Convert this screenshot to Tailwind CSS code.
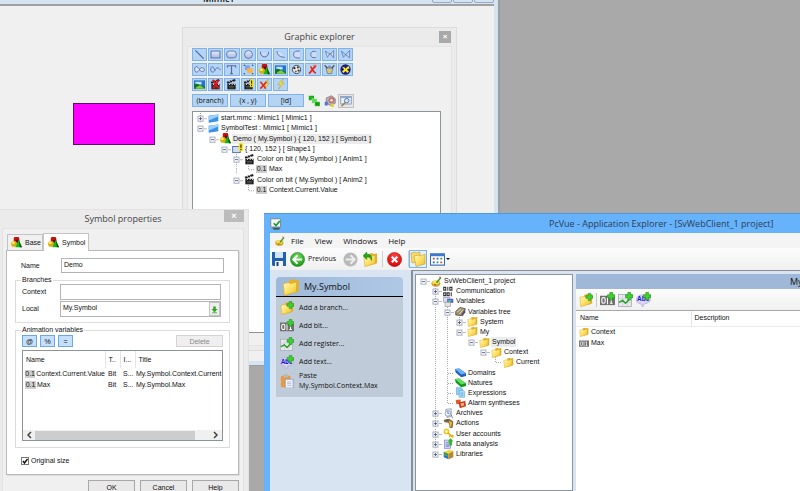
<!DOCTYPE html>
<html lang="en">

<head>
  <meta charset="UTF-8">
  <meta name="viewport" content="width=device-width, initial-scale=1.0">
  <title>PcVue - Application Explorer</title>
  <script src="https://cdn.jsdelivr.net/npm/@tailwindcss/browser@4"></script>
</head>

<body class="relative h-screen overflow-hidden bg-[#a9a9a9] font-['Liberation_Sans',sans-serif] text-[7px] leading-[10px] text-[#111]">

  <!-- icon sprite -->
  <svg class="absolute size-0" aria-hidden="true">
    <defs>
      <linearGradient id="gFolder" x1="0" y1="0" x2="1" y2="1"><stop offset="0" stop-color="#fff9c0"/><stop offset=".5" stop-color="#fde268"/><stop offset="1" stop-color="#eaba2c"/></linearGradient>
      <linearGradient id="gShape" x1="0" y1="0" x2="0" y2="1"><stop offset="0" stop-color="#e4ecfa"/><stop offset="1" stop-color="#a9b9de"/></linearGradient>
      <radialGradient id="gGreen" cx=".5" cy=".3" r=".7"><stop offset="0" stop-color="#6fe05a"/><stop offset="1" stop-color="#129312"/></radialGradient>
      <radialGradient id="gRed" cx=".5" cy=".3" r=".7"><stop offset="0" stop-color="#ff4a40"/><stop offset="1" stop-color="#d80008"/></radialGradient>
    </defs>
    <symbol id="line" viewBox="0 0 16 16"><path d="M2 2L14 14" stroke="#4c608f" stroke-width="1.5"/></symbol>
    <symbol id="rect" viewBox="0 0 16 16"><rect x="1.500" y="3" width="13" height="10" fill="url(#gShape)" stroke="#566aa0" stroke-width="1.3"/></symbol>
    <symbol id="round" viewBox="0 0 16 16"><rect x="1" y="3" width="14" height="10" rx="4" fill="url(#gShape)" stroke="#566aa0" stroke-width="1.2"/></symbol>
    <symbol id="circle" viewBox="0 0 16 16"><circle cx="8" cy="8" r="5.800" fill="url(#gShape)" stroke="#566aa0" stroke-width="1.2"/></symbol>
    <symbol id="arc" viewBox="0 0 16 16"><path d="M2 5C2 14 14 14 14 5Z" fill="#c9d8f2"/><path d="M2 4C2 14 14 14 14 4" fill="none" stroke="#566aa0" stroke-width="1.4"/></symbol>
    <symbol id="arc2" viewBox="0 0 16 16"><path d="M3 3C3 9 8 12 14 12L9 6Z" fill="#d5e0f4"/><path d="M3 3C3 9 8 12 14 12" fill="none" stroke="#566aa0" stroke-width="1.4"/></symbol>
    <symbol id="chord" viewBox="0 0 16 16"><path d="M13 3H9C2 3 2 13 9 13H13" fill="#cfdcf3" stroke="#566aa0" stroke-width="1.3"/></symbol>
    <symbol id="chord2" viewBox="0 0 16 16"><path d="M13 4C3 0 3 16 13 12" fill="#cfdcf3" stroke="#566aa0" stroke-width="1.3"/></symbol>
    <symbol id="poly" viewBox="0 0 16 16"><path d="M2 3L5 12L9 6L14 13V2L9 8L2 3" fill="#d8e3f6" stroke="#566aa0" stroke-width="1"/></symbol>
    <symbol id="poly2" viewBox="0 0 16 16"><path d="M14 13V2L5 12L2 3L14 13" fill="none" stroke="#566aa0" stroke-width="1"/></symbol>
    <symbol id="inf" viewBox="0 0 16 16"><path d="M8 8C5 2 1 3 1 8S6 13 8 8C10 4 15 5 15 8.500S10 12 8 8Z" fill="#d8e3f6" stroke="#566aa0" stroke-width="1.3"/></symbol>
    <symbol id="inf2" viewBox="0 0 16 16"><path d="M7 9C5 2 1 3 1 8S6 13 8 8C10 4 13 5 15 9" fill="none" stroke="#566aa0" stroke-width="1.3"/></symbol>
    <symbol id="text" viewBox="0 0 16 16"><path d="M2 5V2.500H14V5M8 3V14M6 14H10" fill="none" stroke="#566aa0" stroke-width="1.7"/></symbol>
    <symbol id="group" viewBox="0 0 16 16"><rect x="3" y="2" width="7" height="7" fill="#7fa3e8"/><rect x="6" y="6" width="8" height="7" rx="1" fill="#ffb23c"/><path d="M1 1h2v2H1zM13 1h2v2h-2zM1 13h2v2H1zM13 13h2v2h-2z" fill="#39507f"/></symbol>
    <symbol id="shapes" viewBox="0 0 16 16"><rect x="4" y="0" width="8" height="8" rx="2" fill="#c81010"/><path d="M7 4h5v5H7z" fill="#5a0808"/><circle cx="4.500" cy="10" r="4.300" fill="#d8ae08"/><circle cx="3.500" cy="8.500" r="2" fill="#fff06a"/><path d="M11 4L16 15H6.500Z" fill="#18b418"/><path d="M11 4L13 15H16Z" fill="#0a4d0a"/></symbol>
    <symbol id="image" viewBox="0 0 16 16"><path d="M0 2H16V14H0Z" fill="#2374cc"/><path d="M2 4h9v4H2z" fill="#bfe6ff"/><path d="M0 8C5 5 7 10 16 11V14H0Z" fill="#14722c"/><path d="M3 12L9 9L16 14H3Z" fill="#7fcf3a"/></symbol>
    <symbol id="palette" viewBox="0 0 16 16"><circle cx="8" cy="8" r="6" fill="#eee" stroke="#333" stroke-width="1.200"/><circle cx="5" cy="6" r="1.600" fill="#222"/><circle cx="10" cy="5" r="1.600" fill="#444"/><circle cx="11" cy="9.500" r="1.600" fill="#333"/><circle cx="7" cy="11" r="1.500" fill="#666"/></symbol>
    <symbol id="cross" viewBox="0 0 16 16"><path d="M5 4C7 4 9 13 13 13M13 3C10 4 7 10 3 14" fill="none" stroke="#ee2211" stroke-width="2.600"/><path d="M9 2h5" stroke="#f07030" stroke-width="1.500"/></symbol>
    <symbol id="bucket" viewBox="0 0 16 16"><path d="M3 6H13L11 14H5Z" fill="#c8c8ac" stroke="#666"/><path d="M1 2L5 6M15 2L11 6" stroke="#444" stroke-width="2"/><circle cx="8" cy="4" r="2" fill="#7c80d0"/><path d="M6 8h4v4H6z" fill="#e0cc40"/></symbol>
    <symbol id="noevent" viewBox="0 0 16 16"><circle cx="8" cy="8" r="7.500" fill="#20207a"/><path d="M3 4L7 5L8 7L12 3L14 6L10 8L13 11L11 13L8 10L5 13L3 11L6 8Z" fill="#fff01a"/></symbol>
    <symbol id="clap" viewBox="0 0 16 16"><path d="M2 7H14V15H2Z" fill="#151515"/><path d="M1 4L13 0L14 3L2 7Z" fill="#222"/><path d="M4 3l2 2M8 2l2 2M4 9l2-2M8 9l2-2M12 9l1-2" stroke="#fff" stroke-width="1.300"/><path d="M4 11h8M4 13h8" stroke="#999" stroke-width=".7"/></symbol>
    <symbol id="clapx" viewBox="0 0 16 16"><use href="#clap"/><path d="M4 1L13 14M13 1L4 14" stroke="#e01414" stroke-width="2.600"/></symbol>
    <symbol id="clapw" viewBox="0 0 16 16"><use href="#clap"/><rect x="10" y="0" width="5" height="12" rx="2" fill="#ffe600"/><path d="M12.500 2V7M12.500 8.500V10.500" stroke="#222" stroke-width="1.500"/></symbol>
    <symbol id="bolt" viewBox="0 0 16 16"><path d="M10 1L4 8H8L5 15L13 6H9L12 1Z" fill="#ffe629" stroke="#a89a58" stroke-width=".8"/></symbol>
    <symbol id="boltx" viewBox="0 0 16 16"><use href="#bolt" x="2"/><path d="M2 4L10 14M11 4L2 14" stroke="#ee2211" stroke-width="2.200"/></symbol>
    <symbol id="squares" viewBox="0 0 16 16"><path d="M1 1H8V7H1Z" fill="#1cae1c"/><path d="M5 5H12V11H5Z" fill="#55d845" stroke="#fff" stroke-width=".5"/><path d="M9 9H16V15H9Z" fill="#0d9d0d" stroke="#fff" stroke-width=".5"/></symbol>
    <symbol id="gear" viewBox="0 0 16 16"><path d="M3 4L10 1L15 5V11L9 14L3 11Z" fill="#b8b0b4" stroke="#777"/><circle cx="10" cy="7" r="4" fill="#c97070"/><circle cx="10" cy="7" r="1.700" fill="#eee"/><path d="M1 9h4v5H1z" fill="#4b76d8"/><path d="M9 12h4v4H9z" fill="#e9cf30"/></symbol>
    <symbol id="find" viewBox="0 0 16 16"><rect x="1" y="2" width="14" height="10" fill="#e6eef8" stroke="#7c8aa5"/><path d="M1 2h14v2H1z" fill="#8fa9cf"/><circle cx="9" cy="7.500" r="3" fill="#cfe6ff" stroke="#57719c" stroke-width="1.200"/><path d="M7 10L2 15" stroke="#9a7b50" stroke-width="2"/></symbol>
    <symbol id="screen" viewBox="0 0 16 16"><path d="M1 4L15 2V12L1 14Z" fill="#3a90e8"/><path d="M1 4L15 2V5L1 11Z" fill="#9ad0fa"/></symbol>
    <symbol id="shapew" viewBox="0 0 16 16"><rect x="1" y="5" width="11" height="9" fill="#d0def5" stroke="#4864a8" stroke-width="1.300"/><rect x="10" y="0" width="6" height="12" rx="2" fill="#ffe600"/><path d="M13 2V7M13 8.500V10.500" stroke="#222" stroke-width="1.600"/></symbol>
    <symbol id="folder" viewBox="0 0 16 16"><path d="M6 2L10 1L11 2L15 1.500V12L6 14Z" fill="#e3b02a"/><path d="M1 5L6 4L7 5L13 3.500V12.500L2 15.500Z" fill="url(#gFolder)" stroke="#d6a526" stroke-width=".6"/></symbol>
    <symbol id="plus" viewBox="0 0 16 16"><path d="M10.500 .5H13.500V3H16V6H13.500V8.500H10.500V6H8V3H10.500Z" fill="#3fd02c" stroke="#158a18" stroke-width=".6"/></symbol>
    <symbol id="folderadd" viewBox="0 0 16 16"><use href="#folder"/><use href="#plus"/></symbol>
    <symbol id="bit" viewBox="0 0 16 16"><rect y="4" width="16" height="10" fill="#707070"/><rect x="2" y="6" width="3.500" height="6" rx="1.500" fill="none" stroke="#fff" stroke-width="1.200"/><path d="M8 5V13M10.500 7L12 6V12M10.500 12H13.500" fill="none" stroke="#fff" stroke-width="1.100"/></symbol>
    <symbol id="bitadd" viewBox="0 0 16 16"><use href="#bit"/><use href="#plus"/></symbol>
    <symbol id="regadd" viewBox="0 0 16 16"><rect x=".5" y="2.500" width="14" height="13" fill="#e8e8ee" stroke="#a5a5b2" stroke-width=".8"/><path d="M5 3v12M10 3v12M1 7h13M1 11h13" stroke="#c6c6d0" stroke-width=".6"/><path d="M1 11L5 9L8 12L12 8" fill="none" stroke="#20a020" stroke-width="1.500"/><use href="#plus"/></symbol>
    <symbol id="txtadd" viewBox="0 0 16 16"><path d="M8 3C-2 3 -2 12 5 12.500L7 16L9 12.500C18 12 17 3 8 3Z" fill="#d9d4fa" stroke="#a39fd0" stroke-width=".6"/><text x="1" y="10" font-size="7" font-weight="bold" fill="#1d16d4">Abc</text><use href="#plus"/></symbol>
    <symbol id="paste" viewBox="0 0 16 16"><rect x="1" y="2" width="11" height="13" rx="1" fill="#e99a3c"/><rect x="4" y="0" width="5" height="4" rx="1" fill="#b9b9b9"/><path d="M6 6H15V16H6Z" fill="#f4f6fd" stroke="#7f8fb8" stroke-width=".8"/><path d="M8 9h5M8 11h5M8 13h5" stroke="#98a6cc" stroke-width=".8"/></symbol>
    <symbol id="save" viewBox="0 0 16 16"><path d="M1 1H15V15H2L1 14Z" fill="#2260b4"/><rect x="4" y="1" width="8" height="6" fill="#cfe5fa"/><rect x="4" y="10" width="8" height="5" fill="#f2f2f2"/><path d="M5.500 11h2v4h-2z" fill="#1b3f78"/></symbol>
    <symbol id="back" viewBox="0 0 16 16"><circle cx="8" cy="8" r="7.500" fill="url(#gGreen)" stroke="#1b7d1b" stroke-width=".6"/><path d="M8 3.500L3.500 8L8 12.500M4 8H13" fill="none" stroke="#fff" stroke-width="2.200"/></symbol>
    <symbol id="next" viewBox="0 0 16 16"><circle cx="8" cy="8" r="7.500" fill="#b9b9b9"/><path d="M8 3.500L12.500 8L8 12.500M12 8H3" fill="none" stroke="#ededed" stroke-width="2"/></symbol>
    <symbol id="stop" viewBox="0 0 16 16"><circle cx="8" cy="8" r="7.600" fill="url(#gRed)" stroke="#a00" stroke-width=".5"/><path d="M5 5L11 11M11 5L5 11" stroke="#fff" stroke-width="2.200"/></symbol>
    <symbol id="up" viewBox="0 0 16 16"><use href="#folder"/><path d="M9 9C8 6 6 5 4 5.500V8L0 4L4 0V2.500C8 2 10 5 9 9Z" fill="#24a81c" stroke="#0b6d10" stroke-width=".5"/></symbol>
    <symbol id="folders" viewBox="0 0 16 16"><path d="M1 2L5 1L6 2L10 1V10L2 12Z" fill="#f7da6a" stroke="#c89a28" stroke-width=".6"/><path d="M4 5L9 4L10 5L15 3V13L6 15.500Z" fill="url(#gFolder)" stroke="#c89a28" stroke-width=".6"/></symbol>
    <symbol id="grid" viewBox="0 0 16 16"><rect x=".5" y="2" width="15" height="12" fill="#fff" stroke="#2e6ab8" stroke-width="1.200"/><path d="M0 2H16V4.500H0Z" fill="#3d7acb"/><path d="M3 6h2v2H3zM11 10h2v2h-2z" fill="#d34a4a"/><path d="M7 6h2v2H7zM3 10h2v2H3z" fill="#3563c4"/><path d="M11 6h2v2h-2zM7 10h2v2H7z" fill="#3b9a4b"/></symbol>
    <symbol id="app" viewBox="0 0 16 16"><rect x="1" y="1" width="13" height="11" rx="1" fill="#f2f4f2" stroke="#6a7b70"/><path d="M3 13H14L12 15.500H5Z" fill="#4a5a58"/><path d="M5 7L8 10L13 4" fill="none" stroke="#1e9438" stroke-width="2.200"/></symbol>
    <symbol id="project" viewBox="0 0 16 16"><ellipse cx="7" cy="11" rx="6.500" ry="4.500" fill="#c9a51f"/><ellipse cx="7" cy="9.500" rx="5" ry="3" fill="#ffe254"/><path d="M7 9L14 1L15 3L9 11Z" fill="#3f9e3a"/><path d="M4 11l4 1-2 2z" fill="#e04b22"/><path d="M11 1h3v3z" fill="#e04b22"/></symbol>
    <symbol id="comm" viewBox="0 0 16 16"><path d="M1 2h3v4H1zM7 1v6M10 2h3v4h-3zM1 10h3v4H1zM6 10h3v4H6zM12 9v6" fill="none" stroke="#333" stroke-width="1.500"/></symbol>
    <symbol id="vars" viewBox="0 0 16 16"><rect x="1" y="2" width="9" height="7" fill="#dcdff6" stroke="#8d92c8"/><rect x="6" y="4" width="9" height="6" fill="#5361d8"/><rect x="3" y="9" width="8" height="6" fill="#e6e6e6" stroke="#999"/><path d="M7 6h5v2H7z" fill="#4ad07a"/></symbol>
    <symbol id="tree" viewBox="0 0 16 16"><path d="M1 8L7 2L15 4L9 14L1 13Z" fill="#9f8b68" stroke="#45403a"/><path d="M3 9L9 4M6 12L12 5" stroke="#f2ead8" stroke-width="1.300"/><path d="M9 14L15 4V9L11 15Z" fill="#4c4f7c"/></symbol>
    <symbol id="domain" viewBox="0 0 16 16"><path d="M0 3L6 2L16 9V13L9 15L1 8Z" fill="#1e60c4"/><path d="M0 3L6 2L16 9L9 11Z" fill="#69b4f6"/></symbol>
    <symbol id="nature" viewBox="0 0 16 16"><path d="M0 3L6 2L16 9V13L9 15L1 8Z" fill="#0f9a1c"/><path d="M0 3L6 2L16 9L9 11Z" fill="#61e05c"/></symbol>
    <symbol id="expr" viewBox="0 0 16 16"><path d="M2 1H9L11 3V11H2Z" fill="#8ccdf3" stroke="#6aabdc"/><path d="M6 5H12L14 7V15H6Z" fill="#a9dcfa" stroke="#6aabdc"/><path d="M8 9h4M8 12h4" stroke="#4a90c8"/></symbol>
    <symbol id="alarm" viewBox="0 0 16 16"><path d="M1 3L8 2L9 8L2 9Z" fill="#e05a28"/><path d="M5 7L15 4L16 12L7 15Z" fill="#c8401a"/><path d="M8 8l5-1v4l-4 1z" fill="#f5b08c"/></symbol>
    <symbol id="archive" viewBox="0 0 16 16"><path d="M4 2L12 1V12L6 14Z" fill="#dfe8f2" stroke="#8193ac"/><circle cx="7" cy="8" r="4" fill="#eef4fb" stroke="#6f86a6"/><path d="M7 5V8H9M12 10L14 15" stroke="#44618a" fill="none"/></symbol>
    <symbol id="action" viewBox="0 0 16 16"><path d="M1 3L9 1L15 5L14 14L10 15L8 7L2 6Z" fill="#8b6a3d"/><path d="M9 4l4 2-1 6-2 1z" fill="#e8c040"/><path d="M1 3l6-1 1 3z" fill="#555"/></symbol>
    <symbol id="key" viewBox="0 0 16 16"><circle cx="5" cy="5" r="3" fill="none" stroke="#f2c928" stroke-width="2.500"/><path d="M7 7L14 13M11 11L9 13M14 10v4" stroke="#e2b014" stroke-width="2.400"/></symbol>
    <symbol id="analysis" viewBox="0 0 16 16"><rect x="2" y="3" width="9" height="12" fill="#cfd6f2" stroke="#7a86c4"/><path d="M4 7h5M4 10h5M4 12h5" stroke="#5964b0"/><path d="M9 11V5H7L11 0L15 5H13V11Z" fill="#35b52d"/></symbol>
    <symbol id="lib" viewBox="0 0 16 16"><path d="M1 4L9 1L15 3L8 7Z" fill="#f7d247"/><path d="M1 4L8 7V11L1 8Z" fill="#3d9a3c"/><path d="M1 8L8 11V15L1 12Z" fill="#2a76c8"/><path d="M8 7L15 3V12L8 15Z" fill="#b98a22"/></symbol>
    <!-- tree connectors -->
    <symbol id="tv" viewBox="0 0 12 10" preserveAspectRatio="none"><path d="M5.500 0V10" stroke="#aaa" stroke-dasharray="1 1"/></symbol>
    <symbol id="te" viewBox="0 0 12 10" preserveAspectRatio="none"><path d="M5.500 0V5M6 5.500H12" fill="none" stroke="#aaa" stroke-dasharray="1 1"/></symbol>
    <symbol id="tt" viewBox="0 0 12 10" preserveAspectRatio="none"><path d="M5.500 0V10M6 5.500H12" fill="none" stroke="#aaa" stroke-dasharray="1 1"/></symbol>
    <symbol id="tm" viewBox="0 0 12 10" preserveAspectRatio="none"><path d="M9 5.500H12" stroke="#bbb"/><rect x="3" y="3" width="5" height="5" fill="#fff" stroke="#9ea6b6" stroke-width=".9"/><path d="M4 5.500H7" stroke="#334a7c" stroke-width=".8"/></symbol>
    <symbol id="tp" viewBox="0 0 12 10" preserveAspectRatio="none"><use href="#tm"/><path d="M5.500 4V7" stroke="#334a7c" stroke-width=".8"/></symbol>
    <symbol id="tmv" viewBox="0 0 12 10" preserveAspectRatio="none"><use href="#tv"/><use href="#tm"/></symbol>
    <symbol id="tpv" viewBox="0 0 12 10" preserveAspectRatio="none"><use href="#tv"/><use href="#tp"/></symbol>
  </svg>

  <!-- Mimic1 window -->
  <section class="absolute -top-3.5 left-0 flex h-[380px] w-[500px] flex-col border-r-2 border-b border-[#9b9ea3] bg-[#d6e4f2] pr-1 pb-1">
    <header class="relative flex h-5 items-end border-b-2 border-[#a0a0a0] pl-[203px]">
      <h1 class="font-['Open_Sans',sans-serif] text-[9px] font-semibold">Mimic1</h1>
      <div class="absolute top-0 right-0 flex gap-px">
        <button aria-label="Minimize" class="h-[17px] w-5 rounded-b-xs border border-[#9aa9bd]"></button>
        <button aria-label="Maximize" class="h-[17px] w-5 rounded-b-xs border border-[#9aa9bd]"></button>
        <button aria-label="Close" class="h-[17px] w-5 rounded-b-xs border border-[#9aa9bd]"></button>
      </div>
    </header>

    <div class="relative flex-1 bg-[#f0f0f0]">
      <div class="absolute top-[97px] left-[73px] h-[42px] w-[82px] border border-[#5a1070] bg-[#ff00ff]"></div>

      <!-- Graphic explorer -->
      <section class="absolute top-[21px] left-[182px] flex h-[324px] w-[275px] flex-col border border-[#dcdcdc] bg-[#ebebeb] px-1 pb-1">
        <header class="relative flex h-[18px] items-center justify-center">
          <h2 class="font-['Open_Sans',sans-serif] text-[9px] text-[#444]">Graphic explorer</h2>
          <button aria-label="Close" class="absolute top-[3px] right-px flex h-3 w-3 items-center justify-center bg-[#a9a9a9] text-[8px] leading-none font-bold text-white">×</button>
        </header>
        <div class="flex min-h-0 flex-1 flex-col border border-[#e4e4e4] bg-[#f0f0f0] pt-px pr-2.5 pl-1 pb-3">
          <div id="shapeTools" class="grid w-[161px] grid-cols-10 gap-x-px gap-y-0.5"></div>
          <div class="mt-[3px] flex h-[13px] items-center gap-0.5">
            <button class="h-full w-9 border border-[#7fb2e8] bg-[#b3d4f4] font-['Open_Sans',sans-serif] leading-none">(branch)</button>
            <button class="h-full w-9 border border-[#7fb2e8] bg-[#b3d4f4] font-['Open_Sans',sans-serif] leading-none">{x , y}</button>
            <button class="h-full w-9 border border-[#7fb2e8] bg-[#b3d4f4] font-['Open_Sans',sans-serif] leading-none">[id]</button>
            <button aria-label="Links" class="ml-0.5"><svg class="size-3"><use href="#squares"/></svg></button>
            <button aria-label="Options" class="ml-0.5"><svg class="size-3"><use href="#gear"/></svg></button>
            <button aria-label="Search" class="border border-[#c2c2c2] bg-[#e6e6e6] px-px"><svg class="size-3"><use href="#find"/></svg></button>
          </div>
          <div class="mt-1 min-h-0 flex-1 border border-[#8f949c] bg-white py-px pl-0.5">
            <ul id="mimicTree" class="flex h-[82px] flex-col"></ul>
          </div>
        </div>
      </section>
    </div>
  </section>

  <!-- Symbol properties dialog -->
  <section class="absolute top-[209px] bottom-0 left-0 flex w-[249px] flex-col overflow-hidden border-t border-r border-[#e2e2e2] bg-[#ebebeb] pr-1 pl-0.5">
    <header class="relative flex h-[18px] shrink-0 items-center justify-center">
      <h2 class="font-['Open_Sans',sans-serif] text-[9px] text-[#444]">Symbol properties</h2>
      <button aria-label="Close" class="absolute top-0 right-0 flex h-3 w-5 items-center justify-center bg-[#bcbcbc] text-[9px] leading-none font-bold text-white">×</button>
    </header>

    <form class="flex-1 border border-[#e2e2e2] bg-[#f0f0f0] pt-1 pr-1 pl-[3px]" onsubmit="return false">
      <div class="flex items-end pl-px">
        <button type="button" class="flex h-4 w-9 items-center gap-[3px] border border-b-0 border-[#c4c4c4] px-[3px]"><svg class="size-[11px] shrink-0"><use href="#shapes"/></svg>Base</button>
        <button type="button" class="relative -mb-px flex h-[18px] w-[46px] items-center gap-[3px] border border-b-0 border-[#c4c4c4] bg-white px-1"><svg class="size-[11px] shrink-0"><use href="#shapes"/></svg>Symbol</button>
      </div>

      <div class="flex h-[225px] flex-col border border-[#b9b9bd] bg-white px-2 pt-[7px] shadow-[1px_1px_0_#ddd]">
        <div class="flex items-center px-1.5">
          <label for="name" class="w-10">Name</label>
          <input id="name" value="Demo" class="h-[15px] min-w-0 flex-1 border border-[#b4b4b8] px-0.5 pb-0.5">
        </div>

        <fieldset class="mt-0.5 h-12 border border-[#dcdcdc] px-1.5">
          <legend class="-ml-px px-px">Branches</legend>
          <div class="-mt-px flex items-center pr-0.5">
            <label for="context" class="w-[38px]">Context</label>
            <input id="context" class="h-4 min-w-0 flex-1 border border-[#b4b4b8] px-0.5">
          </div>
          <div class="mt-px flex items-center pr-0.5">
            <label for="local" class="w-[38px]">Local</label>
            <div class="flex h-4 flex-1 border border-[#b4b4b8]">
              <input id="local" value="My.Symbol" class="min-w-0 flex-1 px-0.5 pb-0.5">
              <button type="button" aria-label="Pick branch" class="w-[11px] border border-[#c4c4c4] bg-[#eee]"><svg viewBox="0 0 10 14" class="h-full w-full"><path d="M3.500 4H6.500V7H8.500L5 11L1.500 7H3.500ZM2 11h6v1H2z" fill="#35a51d"/></svg></button>
            </div>
          </div>
        </fieldset>

        <fieldset class="mt-0.5 h-[123px] border border-[#dcdcdc] px-1.5">
          <legend class="-ml-px px-px">Animation variables</legend>
          <div class="flex h-3 items-stretch gap-[3px]">
            <button type="button" class="w-[15px] border border-[#6ea8e0] bg-[#c4e0fc] leading-none">@</button>
            <button type="button" class="w-[15px] border border-[#6ea8e0] bg-[#c4e0fc] leading-none">%</button>
            <button type="button" class="w-[15px] border border-[#6ea8e0] bg-[#c4e0fc] leading-none">=</button>
            <button type="button" disabled class="ml-auto w-[47px] border border-[#d4d4d4] bg-[#efefef] leading-none text-[#888]">Delete</button>
          </div>
          <div class="mt-[3px] flex h-[91px] flex-col overflow-hidden border border-[#8c919a]">
            <table class="w-full table-fixed text-left whitespace-nowrap">
              <thead>
                <tr class="h-[17px]">
                  <th class="w-[82px] border-r border-[#dfe6f0] pl-[3px] font-normal">Name</th>
                  <th class="w-[15px] border-r border-[#dfe6f0] pl-[3px] font-normal">T..</th>
                  <th class="w-[15px] border-r border-[#dfe6f0] pl-[3px] font-normal">I...</th>
                  <th class="pl-[3px] font-normal">Title</th>
                </tr>
              </thead>
              <tbody>
                <tr class="h-[11px]">
                  <td class="pl-0.5"><span class="flex items-center gap-px"><span class="w-[11px] bg-[#cfcfcf] text-center leading-[8px]">0.1</span>Context.Current.Value</span></td>
                  <td class="pl-[3px]">Bit</td>
                  <td class="pl-[3px]">S...</td>
                  <td class="pl-px">My.Symbol.Context.Current</td>
                </tr>
                <tr class="h-[11px]">
                  <td class="pl-0.5"><span class="flex items-center gap-px"><span class="w-[11px] bg-[#cfcfcf] text-center leading-[8px]">0.1</span>Max</span></td>
                  <td class="pl-[3px]">Bit</td>
                  <td class="pl-[3px]">S...</td>
                  <td class="pl-px">My.Symbol.Max</td>
                </tr>
              </tbody>
            </table>
            <div class="mt-auto flex h-[10px] items-center bg-[#f0f0f0]">
              <svg viewBox="0 0 12 10" class="h-2.5 w-3"><path d="M8 2L5 5L8 8" fill="none" stroke="#444" stroke-width="1.500"/></svg>
              <div class="h-[9px] w-40 bg-[#cdcdcd]"></div>
              <svg viewBox="0 0 12 10" class="ml-auto h-2.5 w-3"><path d="M4 2L7 5L4 8" fill="none" stroke="#444" stroke-width="1.500"/></svg>
            </div>
          </div>
        </fieldset>

        <label class="mt-2 flex items-center gap-0.5 px-1.5">
          <input type="checkbox" checked class="peer size-2 appearance-none border border-[#777] bg-white">
          <svg viewBox="0 0 8 8" class="-ml-2.5 hidden size-2 peer-checked:block"><path d="M2 4L3.500 6L6.500 2" fill="none" stroke="#111" stroke-width="1.400"/></svg>
          Original size
        </label>
      </div>

      <div class="mt-[5px] flex justify-end gap-[5px]">
        <button class="h-[15px] w-[47px] border border-[#a8a8a8] bg-[#e9e9e9] leading-none">OK</button>
        <button class="h-[15px] w-[47px] border border-[#a8a8a8] bg-[#e9e9e9] leading-none">Cancel</button>
        <button class="h-[15px] w-[47px] border border-[#a8a8a8] bg-[#e9e9e9] leading-none">Help</button>
      </div>
    </form>
  </section>

  <!-- Application Explorer -->
  <section class="absolute top-[213px] right-0 bottom-0 left-[264px] flex flex-col overflow-hidden border-t border-[#4f98dc] bg-[#66b2fb] pl-1.5">
    <header class="relative flex h-[19px] shrink-0 items-center pl-[279px]">
      <svg class="absolute top-1 left-0 size-3"><use href="#app"/></svg>
      <h2 class="font-['Open_Sans',sans-serif] text-[9px] whitespace-nowrap text-[#2c3e55]">PcVue - Application Explorer - [SvWebClient_1 project]</h2>
    </header>
    <nav class="flex h-[15px] shrink-0 items-center gap-[11px] bg-[#f4f4f4] pl-[5px] font-['Open_Sans',sans-serif] text-[8px]">
      <svg class="-mr-[5px] size-2.5"><use href="#project"/></svg>
      <a href="#">File</a>
      <a href="#">View</a>
      <a href="#">Windows</a>
      <a href="#">Help</a>
    </nav>
    <div class="flex h-[22px] shrink-0 items-center bg-linear-to-b from-[#fcfcfc] to-[#f0f0f0] pl-px font-['Open_Sans',sans-serif]">
      <button aria-label="Save"><svg class="size-4"><use href="#save"/></svg></button>
      <button class="ml-[3px] flex items-center gap-[3px]"><svg class="size-[15px]"><use href="#back"/></svg>Previous</button>
      <button aria-label="Next" class="ml-[7px]"><svg class="size-[15px]"><use href="#next"/></svg></button>
      <button aria-label="Up" class="ml-[5px]"><svg class="size-[15px]"><use href="#up"/></svg></button>
      <span class="mx-1 h-4 w-px bg-[#cfcfcf]"></span>
      <button aria-label="Stop"><svg class="size-[15px]"><use href="#stop"/></svg></button>
      <span class="ml-1.5 h-4 w-px bg-[#cfcfcf]"></span>
      <button aria-label="Folders" class="border border-[#7ab4f0] bg-[#e3f0fd]"><svg class="size-4"><use href="#folders"/></svg></button>
      <button aria-label="View" class="ml-[3px] flex items-center gap-px"><svg class="size-[15px]"><use href="#grid"/></svg><svg viewBox="0 0 4 4" class="size-1"><path d="M0 1H4L2 3Z" fill="#111"/></svg></button>
    </div>

    <div class="flex min-h-0 flex-1 bg-[#d8e4f2]">
      <aside class="w-[141px] shrink-0 pt-[7px] pr-2 pl-1.5 font-['Open_Sans',sans-serif]">
        <h3 class="flex h-5 items-center gap-1 rounded-t-[4px] border-b border-black bg-linear-to-r from-[#9db9da] to-[#afc8e4] pl-1.5 text-[9px]"><svg class="size-[18px]"><use href="#folder"/></svg>My.Symbol</h3>
        <ul id="actions" class="bg-[#bfcbd8] pt-0.5 pb-1.5"></ul>
      </aside>
      <div class="flex min-w-0 flex-1 gap-[3px] border-t border-l-2 border-[#8a8f96] pt-[3px] pl-0.5">
        <div class="w-[158px] shrink-0 border border-[#8e949c] bg-white pt-px pl-0.5">
          <ul id="appTree" class="flex h-[183px] flex-col"></ul>
        </div>
        <div class="flex min-w-0 flex-1 flex-col overflow-hidden bg-white">
          <h3 class="flex h-[15px] items-center bg-[#9fb8d7] pl-[214px] font-['Open_Sans',sans-serif] text-[9px]">My.Symbol</h3>
          <div class="flex h-[22px] items-center gap-[3px] border-b border-[#a8a8a8] bg-linear-to-b from-[#fcfcfc] to-[#f0f0f0] pl-[3px]">
            <button aria-label="Add a branch"><svg class="size-3.5"><use href="#folderadd"/></svg></button>
            <span class="h-3.5 w-px bg-[#c8c8c8]"></span>
            <button aria-label="Add bit"><svg class="size-[15px]"><use href="#bitadd"/></svg></button>
            <button aria-label="Add register"><svg class="size-[15px]"><use href="#regadd"/></svg></button>
            <button aria-label="Add text"><svg class="size-[15px]"><use href="#txtadd"/></svg></button>
          </div>
          <table class="w-full text-left">
            <thead>
              <tr class="h-[15px] border-b border-[#ebebf0]">
                <th class="w-[115px] border-r border-[#e0e6ee] pl-1 font-normal">Name</th>
                <th class="pl-[3px] font-normal">Description</th>
              </tr>
            </thead>
            <tbody>
              <tr class="h-[11px]"><td class="pl-[3px]"><span class="flex items-center gap-0.5"><svg class="size-2.5"><use href="#folder"/></svg>Context</span></td><td></td></tr>
              <tr class="h-[11px]"><td class="pl-[3px]"><span class="flex items-center gap-0.5"><svg class="size-2.5"><use href="#bit"/></svg>Max</span></td><td></td></tr>
            </tbody>
          </table>
        </div>
      </div>
    </div>
  </section>

  <script>
  const tools = ['line', 'rect', 'round', 'circle', 'arc', 'arc2', 'chord', 'chord2', 'poly', 'poly2',
    'inf', 'inf2', 'text', 'group', 'shapes', 'image', 'palette', 'cross', 'bucket', 'noevent',
    'image', 'clapx', 'clap', 'clapw', 'boltx', 'bolt'];

  document.getElementById('shapeTools').innerHTML = tools.map(t =>
    `<button aria-label="${t}" class="flex h-[13px] items-center justify-center border border-[#7fb2e8] bg-[#b3d4f4]"><svg class="size-[11px]"><use href="#${t}"/></svg></button>`
  ).join('');

  // [connector cells, icon, label, selected]
  const mimicRows = [
    ['tpv', 'screen', 'start.mmc : Mimic1 [ Mimic1 ]'],
    ['tm', 'screen', 'SymbolTest : Mimic1 [ Mimic1 ]'],
    ['- tm', 'shapes', 'Demo ( My.Symbol ) { 120, 152 } [ Symbol1 ]', true],
    ['- - tm', 'shapew', '{ 120, 152 } [ Shape1 ]'],
    ['- - - tmv', 'clap', 'Color on bit ( My.Symbol ) [ Anim1 ]'],
    ['- - - tv te', '0.1', 'Max'],
    ['- - - tm', 'clap', 'Color on bit ( My.Symbol ) [ Anim2 ]'],
    ['- - - - te', '0.1', 'Context.Current.Value'],
  ];

  const appRows = [
    ['tm', 'project', 'SvWebClient_1 project'],
    ['- tpv', 'comm', 'Communication'],
    ['- tmv', 'vars', 'Variables'],
    ['- tv tmv', 'tree', 'Variables tree'],
    ['- tv tv tpv', 'folder', 'System'],
    ['- tv tv tm', 'folder', 'My'],
    ['- tv tv - tm', 'folder', 'Symbol', true],
    ['- tv tv - - tm', 'folder', 'Context'],
    ['- tv tv - - - te', 'folder', 'Current'],
    ['- tv tt', 'domain', 'Domains'],
    ['- tv tt', 'nature', 'Natures'],
    ['- tv tt', 'expr', 'Expressions'],
    ['- tv te', 'alarm', 'Alarm syntheses'],
    ['- tpv', 'archive', 'Archives'],
    ['- tpv', 'action', 'Actions'],
    ['- tpv', 'key', 'User accounts'],
    ['- tpv', 'analysis', 'Data analysis'],
    ['- tp', 'lib', 'Libraries'],
  ];

  function renderTree(id, rows) {
    document.getElementById(id).innerHTML = rows.map(([cells, icon, label, selected]) => {
      const lines = cells.split(' ').map(c => c === '-'
        ? '<span class="w-3 shrink-0"></span>'
        : `<svg class="h-full w-3 shrink-0"><use href="#${c}"/></svg>`).join('');
      const pic = icon === '0.1'
        ? '<span class="w-[11px] bg-[#cfcfcf] text-center leading-[8px]">0.1</span>'
        : `<svg class="size-[11px] shrink-0"><use href="#${icon}"/></svg>`;
      return `<li class="flex min-h-0 flex-1 items-center gap-px whitespace-nowrap"><span class="flex h-full">${lines}</span>${pic}<span class="${selected ? 'bg-[#ececec] px-px' : 'px-px'}">${label}</span></li>`;
    }).join('');
  }

  renderTree('mimicTree', mimicRows);
  renderTree('appTree', appRows);

  const actions = [
    ['folderadd', 'Add a branch...'],
    ['bitadd', 'Add bit...'],
    ['regadd', 'Add register...'],
    ['txtadd', 'Add text...'],
    ['paste', 'Paste<br>My.Symbol.Context.Max'],
  ];
  document.getElementById('actions').innerHTML = actions.map(([icon, label]) =>
    `<li><a href="#" class="flex min-h-[18px] items-center gap-[5px] pl-1"><svg class="size-3.5 shrink-0"><use href="#${icon}"/></svg><span>${label}</span></a></li>`
  ).join('');
  </script>
</body>

</html>
